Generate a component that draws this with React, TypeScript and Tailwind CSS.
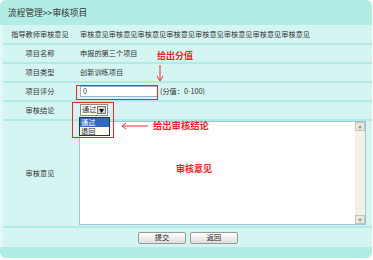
import { ReactNode } from 'react';

const font = { fontFamily: '"Noto Sans CJK SC", "Liberation Sans", sans-serif' };

const small = 'text-[7.2px] text-[#333] whitespace-nowrap';

function Row({ label, children, h = 'h-[19px]' }: { label: string; children?: ReactNode; h?: string }) {
  return (
    <div className={`flex ${h} border-b-2 border-[#b0eae2]`}>
      <div className={`w-[74px] shrink-0 flex items-center justify-center ${small}`}>{label}</div>
      <div className={`flex-1 flex items-center pl-[3px] ${small}`}>{children}</div>
    </div>
  );
}

function Btn({ children }: { children: ReactNode }) {
  return (
    <button className="w-[48px] h-[12px] rounded-[2px] border border-[#9a9a9a] bg-gradient-to-b from-white to-[#dedede] text-[7.2px] leading-none text-[#222] flex items-center justify-center">
      {children}
    </button>
  );
}

export default function App() {
  return (
    <div className="relative w-[373px] h-[260px] bg-white overflow-hidden" style={font}>
      <div className="w-[372px] h-[258px] flex flex-col rounded-[6px] overflow-hidden bg-[#d4f5f1]">
        <header className="h-[25px] shrink-0 bg-[#b1ede4] flex items-center pl-[8px] text-[8.7px] text-[#333]">
          流程管理&gt;&gt;审核项目
        </header>

        <div className="flex-1 flex flex-col border-l-[3px] border-[#e3f8f4]">
          <Row label="指导教师审核意见" h="h-[20px]">
            审核意见审核意见审核意见审核意见审核意见审核意见审核意见审核意见
          </Row>
          <Row label="项目名称">申报的第三个项目</Row>
          <Row label="项目类型">创新训练项目</Row>
          <Row label="项目评分">
            <div className="w-[78px] h-[11px] bg-white border border-[#9bb3c4] flex items-center pl-[2px] text-[#444]">0</div>
            <span className="ml-[2px]">(分值：0-100)</span>
          </Row>
          <Row label="审核结论">
            <div className="w-[28px] h-[12px] -mt-[2px] bg-white border border-[#8a8a8a] flex items-center">
              <span className="flex-1 pl-[1px]">通过</span>
              <span className="w-[9px] h-[8px] mr-[1px] bg-[#d8d6d0] border border-[#777] flex items-center justify-center text-[5px] leading-none text-black">▼</span>
            </div>
          </Row>
          <div className="flex h-[107px] border-b-2 border-[#b0eae2]">
            <div className={`w-[74px] shrink-0 flex items-center justify-center ${small}`}>审核意见</div>
            <div className="flex-1 flex items-start pl-[2px] pr-[6px]">
              <div className="flex-1 h-[104px] bg-white border border-[#9ec4df] flex justify-end">
                <div className="w-[10px] h-full bg-[#f4f1e8] flex flex-col justify-between">
                  <div className="h-[9px] bg-[#ebe8df] border border-[#c5c2b8] flex items-center justify-center text-[4px] text-[#999]">▲</div>
                  <div className="h-[9px] bg-[#ebe8df] border border-[#c5c2b8] flex items-center justify-center text-[4px] text-[#999]">▼</div>
                </div>
              </div>
            </div>
          </div>
          <div className="h-[19px] flex items-center justify-center gap-[4px] pl-[1px]">
            <Btn>提交</Btn>
            <Btn>返回</Btn>
          </div>
          <div className="flex-1 -ml-[3px] bg-[#b1ede4]" />
        </div>
      </div>

      {/* annotations */}
      <div className="absolute left-[157px] top-[51px] text-[9px] font-bold text-[#ff1a1a] leading-none">给出分值</div>
      <svg className="absolute left-[156px] top-[65px]" width="8" height="17" viewBox="0 0 8 17">
        <line x1="4" y1="0" x2="4" y2="15" stroke="#ff2a2a" strokeWidth="1" />
        <path d="M1 11 L4 16 L7 11" fill="none" stroke="#ff2a2a" strokeWidth="1" />
      </svg>
      <div className="absolute left-[76px] top-[85px] w-[82px] h-[15px] border border-[#ff2020]" />

      <div className="absolute left-[79px] top-[117px] w-[31px] h-[19px] border border-[#333] bg-[#fffcf2] text-[7.2px] leading-[8.5px]">
        <div className="bg-[#316ac5] text-white pl-[1px]">通过</div>
        <div className="pl-[1px] text-[#222]">退回</div>
      </div>
      <div className="absolute left-[72px] top-[102px] w-[42px] h-[36px] border border-[#ff2020]" />

      <svg className="absolute left-[121px] top-[122px]" width="28" height="8" viewBox="0 0 28 8">
        <line x1="1" y1="4" x2="27" y2="4" stroke="#ff2a2a" strokeWidth="1" />
        <path d="M5 1 L1 4 L5 7" fill="none" stroke="#ff2a2a" strokeWidth="1" />
      </svg>
      <div className="absolute left-[153px] top-[121px] text-[9.3px] font-bold text-[#ff1a1a] leading-none">给出审核结论</div>
      <div className="absolute left-[176px] top-[164px] text-[9px] font-bold text-[#ff1a1a] leading-none">审核意见</div>
    </div>
  );
}
